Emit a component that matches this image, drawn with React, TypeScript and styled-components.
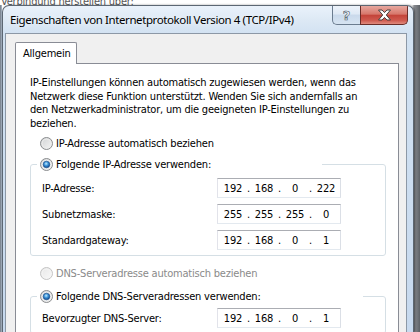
import React, { useId } from "react";
import styled, { createGlobalStyle } from "styled-components";

const GlobalStyle = createGlobalStyle`
  html, body { margin: 0; padding: 0; }
  body {
    width: 420px;
    height: 332px;
    overflow: hidden;
    background: #ffffff;
    font-family: "DejaVu Sans Condensed", "DejaVu Sans", sans-serif;
    font-size: 11px;
    letter-spacing: -0.2px;
    color: #000;
  }
`;

type RadioProps = { checked?: boolean; disabled?: boolean };

const RadioMark = ({ checked, disabled }: RadioProps) => {
  const id = useId().replace(/:/g, "");
  return (
    <svg width="13" height="13" viewBox="0 0 13 13">
      <defs>
        <linearGradient id={`o${id}`} x1="0" y1="0" x2="1" y2="1">
          <stop offset="0" stopColor={disabled ? "#e6e6e6" : "#cfd1d3"} />
          <stop offset="1" stopColor={disabled ? "#fafafa" : "#f7f7f7"} />
        </linearGradient>
        <radialGradient id={`d${id}`} cx="0.45" cy="0.38" r="0.65">
          <stop offset="0" stopColor="#c6ecff" />
          <stop offset="0.45" stopColor="#3d95d9" />
          <stop offset="1" stopColor="#0b3c80" />
        </radialGradient>
      </defs>
      <circle cx="6.5" cy="6.5" r="6" fill={`url(#o${id})`} stroke={disabled ? "#c4c4c4" : "#8b8d8f"} />
      <circle cx="6.5" cy="6.5" r="4.4" fill="none" stroke={disabled ? "#f4f4f4" : "#ececec"} />
      {checked && <circle cx="6.5" cy="6.5" r="3.3" fill={`url(#d${id})`} stroke="#1a4f8e" strokeWidth="0.6" />}
    </svg>
  );
};

const CloseGlyph = () => (
  <svg width="15" height="12" viewBox="0 0 15 12">
    <path
      d="M1.5 1 H5 L7.5 3.6 L10 1 H13.5 L9.3 6 L13.5 11 H10 L7.5 8.4 L5 11 H1.5 L5.7 6 Z"
      fill="#ffffff"
      stroke="#45403f"
      strokeWidth="1"
      strokeLinejoin="round"
    />
  </svg>
);

type IpProps = { parts: string[] };

const IpField = ({ parts }: IpProps) => (
  <IpBox>
    {parts.map((p, i) => (
      <React.Fragment key={i}>
        {i > 0 && <IpDot>.</IpDot>}
        <IpPart>{p}</IpPart>
      </React.Fragment>
    ))}
  </IpBox>
);

const App = () => {
  return (
    <Screen>
      <GlobalStyle />
      <BehindStrip>Verbindung herstellen über:</BehindStrip>
      <Window>
        <TitleBar>
          <Title>Eigenschaften von Internetprotokoll Version 4 (TCP/IPv4)</Title>
          <CaptionButtons>
            <HelpButton>?</HelpButton>
            <CloseButton>
              <CloseGlyph />
            </CloseButton>
          </CaptionButtons>
        </TitleBar>
        <FrameRow>
          <SideFrame $width={2} />
          <Client>
            <TabStrip>
              <Tab>Allgemein</Tab>
            </TabStrip>
            <Panel>
              <Intro>
                IP-Einstellungen können automatisch zugewiesen werden, wenn das
                <br />
                Netzwerk diese Funktion unterstützt. Wenden Sie sich andernfalls an
                <br />
                den Netzwerkadministrator, um die geeigneten IP-Einstellungen zu
                <br />
                beziehen.
              </Intro>

              <RadioRow $gap={6}>
                <RadioMark />
                <span>IP-Adresse automatisch beziehen</span>
              </RadioRow>

              <Group $gap={7}>
                <Legend $width={285}>
                  <RadioMark checked />
                  <span>Folgende IP-Adresse verwenden:</span>
                </Legend>
                <FieldList $top={7}>
                  <FieldRow>
                    <FieldLabel>IP-Adresse:</FieldLabel>
                    <IpField parts={["192", "168", "0", "222"]} />
                  </FieldRow>
                  <FieldRow>
                    <FieldLabel>Subnetzmaske:</FieldLabel>
                    <IpField parts={["255", "255", "255", "0"]} />
                  </FieldRow>
                  <FieldRow>
                    <FieldLabel>Standardgateway:</FieldLabel>
                    <IpField parts={["192", "168", "0", "1"]} />
                  </FieldRow>
                </FieldList>
              </Group>

              <RadioRow $gap={10} $disabled>
                <RadioMark disabled />
                <span>DNS-Serveradresse automatisch beziehen</span>
              </RadioRow>

              <Group $gap={9}>
                <Legend $width={326}>
                  <RadioMark checked />
                  <span>Folgende DNS-Serveradressen verwenden:</span>
                </Legend>
                <FieldList $top={5}>
                  <FieldRow>
                    <FieldLabel>Bevorzugter DNS-Server:</FieldLabel>
                    <IpField parts={["192", "168", "0", "1"]} />
                  </FieldRow>
                </FieldList>
              </Group>
            </Panel>
          </Client>
          <SideFrame $width={6} />
        </FrameRow>
      </Window>
    </Screen>
  );
};

export default App;

const Screen = styled.div`
  width: 420px;
  height: 332px;
  overflow: hidden;
  display: flex;
  flex-direction: column;
  background: linear-gradient(90deg, #6f7782 0, #aebdcc 2px, #ffffff 2px, #ffffff 412px, #8c8f94 414px, #5d6166 420px);
`;

const BehindStrip = styled.div`
  flex-shrink: 0;
  height: 5px;
  overflow: hidden;
  line-height: 4px;
  padding-left: 1px;
  color: #555;
  background: #fff;
  white-space: nowrap;
`;

const Window = styled.div`
  flex: 1;
  min-height: 0;
  overflow: hidden;
  width: 410px;
  margin-left: 2px;
  display: flex;
  flex-direction: column;
  border: 1px solid #5c6773;
  border-bottom: none;
  border-radius: 7px 7px 0 0;
  background: linear-gradient(180deg, #eaf2fb 0, #dde9f5 14px, #d2e2f2 28px, #c7d9ee 100%);
  box-shadow: 1px 0 2px rgba(0, 0, 0, 0.45);
`;

const TitleBar = styled.div`
  flex-shrink: 0;
  height: 27px;
  display: flex;
  align-items: center;
  justify-content: space-between;
`;

const Title = styled.div`
  padding-left: 7px;
  font-family: "Noto Sans", "Open Sans", sans-serif;
  font-size: 11.5px;
  letter-spacing: -0.4px;
  color: #000;
  white-space: nowrap;
  text-shadow: 0 0 6px rgba(255, 255, 255, 0.9);
`;

const CaptionButtons = styled.div`
  align-self: flex-start;
  display: flex;
  margin-right: 5px;
  height: 19px;
`;

const HelpButton = styled.div`
  width: 28px;
  box-sizing: border-box;
  border: 1px solid #6b7c8f;
  border-top: none;
  border-right: none;
  border-radius: 0 0 0 5px;
  background: linear-gradient(180deg, #edf3fa 0, #dfe9f5 45%, #c9d9eb 50%, #d7e4f2 100%);
  display: flex;
  align-items: center;
  justify-content: center;
  font-family: "DejaVu Sans", sans-serif;
  font-weight: bold;
  font-size: 13px;
  color: #f2f5f8;
  -webkit-text-stroke: 0.6px #4a5664;
`;

const CloseButton = styled.div`
  width: 48px;
  box-sizing: border-box;
  border: 1px solid #6a2d28;
  border-top: none;
  border-radius: 0 0 5px 0;
  background: linear-gradient(180deg, #e7a89f 0, #d7776b 45%, #c4443a 52%, #cf5a4f 80%, #e08b7e 100%);
  display: flex;
  align-items: center;
  justify-content: center;
`;

const FrameRow = styled.div`
  flex: 1;
  display: flex;
  min-height: 0;
`;

const SideFrame = styled.div<{ $width: number }>`
  width: ${(p) => p.$width}px;
  flex-shrink: 0;
`;

const Client = styled.div`
  flex: 1;
  display: flex;
  flex-direction: column;
  min-width: 0;
  background: #f0f0f0;
  border: 1px solid #8c98a6;
  border-bottom: none;
  padding: 8px 7px 0 9px;
`;

const TabStrip = styled.div`
  display: flex;
  flex-shrink: 0;
`;

const Tab = styled.div`
  position: relative;
  z-index: 1;
  width: 62px;
  height: 22px;
  box-sizing: border-box;
  margin-bottom: -1px;
  padding-left: 7px;
  border: 1px solid #898c95;
  border-bottom: none;
  border-radius: 2px 2px 0 0;
  background: #fff;
  display: flex;
  align-items: center;
`;

const Panel = styled.div`
  flex: 1;
  background: #fff;
  border: 1px solid #898c95;
  border-bottom: none;
  padding: 12px 12px 0 14px;
  display: flex;
  flex-direction: column;
`;

const Intro = styled.p`
  margin: 0;
  line-height: 13.5px;
  white-space: nowrap;
`;

const RadioRow = styled.div<{ $gap: number; $disabled?: boolean }>`
  flex-shrink: 0;
  margin-top: ${(p) => p.$gap}px;
  margin-left: 10px;
  height: 14px;
  display: flex;
  align-items: center;
  gap: 3px;
  color: ${(p) => (p.$disabled ? "#8a8a8a" : "#000")};
  white-space: nowrap;
`;

const Group = styled.fieldset<{ $gap: number }>`
  flex-shrink: 0;
  margin: ${(p) => p.$gap}px 0 0 0;
  padding: 0 0 5px 11px;
  border: 1px solid #d5dfe5;
  border-radius: 3px;
  min-width: 0;
`;

const Legend = styled.legend<{ $width: number }>`
  width: ${(p) => p.$width}px;
  box-sizing: border-box;
  margin-left: -5px;
  padding: 0 0 0 3px;
  height: 14px;
  display: flex;
  align-items: center;
  gap: 3px;
  background: #fff;
  white-space: nowrap;
`;

const FieldList = styled.div<{ $top: number }>`
  padding-top: ${(p) => p.$top}px;
  display: flex;
  flex-direction: column;
  gap: 6px;
`;

const FieldRow = styled.div`
  display: flex;
  align-items: center;
  height: 20px;
`;

const FieldLabel = styled.div`
  width: 175px;
  white-space: nowrap;
`;

const IpBox = styled.div`
  width: 124px;
  height: 20px;
  box-sizing: border-box;
  border: 1px solid;
  border-color: #abadb3 #dbdfe6 #e3e9ef #e2e3ea;
  background: #fff;
  display: flex;
  align-items: center;
  padding-left: 3px;
`;

const IpPart = styled.span`
  width: 24px;
  text-align: center;
`;

const IpDot = styled.span`
  width: 7px;
  text-align: center;
`;
